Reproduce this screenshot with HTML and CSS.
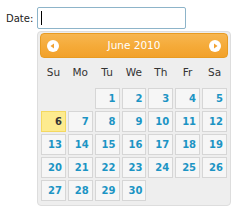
FILE: index.html
```html
<!DOCTYPE html>
<html>
<head>
<meta charset="utf-8">
<link rel="stylesheet" href="styles.css">
</head>
<body>
<div class="field">
  <label class="label" for="date">Date:</label>
  <span class="input-wrap"><input id="date" class="input" type="text"><span class="caret"></span></span>
</div>
<div class="datepicker">
  <div class="dp-header">
    <svg class="nav" width="12" height="12" viewBox="0 0 12 12"><circle cx="6" cy="6" r="6" fill="#fff"/><path d="M3.5 6 L7 3.5 L7 8.5 Z" fill="#f2a232"/></svg>
    <div class="dp-title">June 2010</div>
    <svg class="nav" width="12" height="12" viewBox="0 0 12 12"><circle cx="6" cy="6" r="6" fill="#fff"/><path d="M8.5 6 L5 3.5 L5 8.5 Z" fill="#f2a232"/></svg>
  </div>
  <table class="dp-table">
    <thead>
      <tr><th>Su</th><th>Mo</th><th>Tu</th><th>We</th><th>Th</th><th>Fr</th><th>Sa</th></tr>
    </thead>
    <tbody>
      <tr><td></td><td></td><td><a class="day">1</a></td><td><a class="day">2</a></td><td><a class="day">3</a></td><td><a class="day">4</a></td><td><a class="day">5</a></td></tr>
      <tr><td><a class="day today">6</a></td><td><a class="day">7</a></td><td><a class="day">8</a></td><td><a class="day">9</a></td><td><a class="day">10</a></td><td><a class="day">11</a></td><td><a class="day">12</a></td></tr>
      <tr><td><a class="day">13</a></td><td><a class="day">14</a></td><td><a class="day">15</a></td><td><a class="day">16</a></td><td><a class="day">17</a></td><td><a class="day">18</a></td><td><a class="day">19</a></td></tr>
      <tr><td><a class="day">20</a></td><td><a class="day">21</a></td><td><a class="day">22</a></td><td><a class="day">23</a></td><td><a class="day">24</a></td><td><a class="day">25</a></td><td><a class="day">26</a></td></tr>
      <tr><td><a class="day">27</a></td><td><a class="day">28</a></td><td><a class="day">29</a></td><td><a class="day">30</a></td><td></td><td></td><td></td></tr>
    </tbody>
  </table>
</div>
</body>
</html>
```
FILE: styles.css
```css
html, body {
  margin: 0;
  background: #ffffff;
}
body {
  padding: 7px 6px 0 6px;
  font-family: "DejaVu Sans", Verdana, sans-serif;
  color: #222;
}
.field {
  display: flex;
  align-items: center;
  gap: 4px;
  height: 22px;
}
.label {
  font-size: 10px;
  color: #222;
  width: 27px;
}
.input-wrap {
  position: relative;
  display: block;
}
.input {
  display: block;
  box-sizing: border-box;
  width: 149px;
  height: 22px;
  margin: 0;
  border: 1px solid #8db4c9;
  border-radius: 2px;
  padding: 0 3px;
  outline: none;
  background: #fff;
  font-family: "DejaVu Sans", sans-serif;
  font-size: 11px;
}
.caret {
  position: absolute;
  left: 4px;
  top: 4px;
  width: 1px;
  height: 14px;
  background: #000;
}
.datepicker {
  margin: 2px 0 0 31px;
  width: 194px;
  box-sizing: border-box;
  border: 1px solid #dddddd;
  border-radius: 4px;
  background: #eeeeee;
  padding: 1px 2px 2px 2px;
}
.dp-header {
  display: flex;
  align-items: center;
  padding: 2px 6px;
  border: 1px solid #e89b22;
  border-radius: 4px;
  background: linear-gradient(to bottom, #f7b650 0%, #f5ab3a 50%, #f2a12a 100%);
  color: #ffffff;
}
.nav {
  display: block;
  flex: none;
}
.dp-title {
  flex: 1;
  text-align: center;
  line-height: 19px;
  font-size: 10.5px;
}
.dp-table {
  width: 100%;
  border-collapse: separate;
  border-spacing: 0;
  margin: 0 0 1px 0;
  font-size: 10px;
}
.dp-table th {
  padding: 8px 2px;
  line-height: 13px;
  font-weight: normal;
  color: #333;
  font-size: 10.5px;
  text-align: center;
}
.dp-table td {
  padding: 1px;
}
.day {
  display: block;
  padding: 3px 3px;
  line-height: 13px;
  text-align: right;
  border: 1px solid #d6d6d6;
  background: #f6f6f6;
  color: #1c94c4;
  font-weight: bold;
}
.day.today {
  border-color: #f4d860;
  background: #fdeb8f;
  color: #363636;
}
```
